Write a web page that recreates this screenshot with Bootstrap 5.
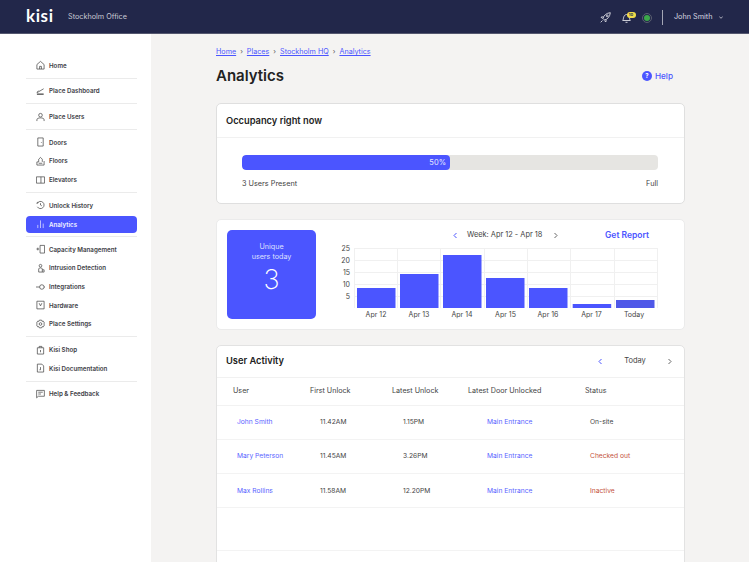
<!doctype html>
<html lang="en"><head><meta charset="utf-8"><title>Analytics</title>
<link href="https://cdn.jsdelivr.net/npm/bootstrap@5.3.0/dist/css/bootstrap.min.css" rel="stylesheet">
<style>
html,body{height:562px;overflow:hidden}
body{font-family:Inter,"Liberation Sans",sans-serif;background:#f4f3f2;color:#222;font-size:8px}
a{color:#4b55ff}
.topbar{height:34px;background:#22274a;border-bottom:1px solid #54576f;color:#d4d4dc;padding-top:2px}
.brand{font:700 17px/1 Lato,Inter,sans-serif;color:#fff;letter-spacing:.6px;margin-left:26px;width:42px;margin-top:-5px}
.office{font-size:7.25px;color:#c9cad4}
.tools{margin-right:26px}
.rocket{margin-right:10.7px}
.bellwrap{width:9px;height:10px;margin-right:11.300px}
.tick{width:1px;height:15px;background:#a4a6b5;margin:0 10.700px 0 10px}
.uname{font-size:7.25px;color:#d8d8e0;margin-right:6.500px}
.nbadge{position:absolute;top:-.5px;right:-4.500px;width:9px;height:6px;border-radius:3px;background:#f1dc4a;color:#22274a;font-size:4px;line-height:6px;text-align:center;font-weight:700}
.status-dot{width:10px;height:10px;border-radius:50%;border:1px solid #5a5f70;background:#22274a;display:flex;align-items:center;justify-content:center}
.status-dot i{display:block;width:6px;height:6px;border-radius:50%;background:#3ca84a}
.layout{height:528px}
.side{width:151px;background:#fff;padding:22px 14px 0 26px;flex:none}
.sitem{height:18.7px;display:flex;align-items:center;gap:4px;padding-left:10px;font-size:6.200px;font-weight:600;color:#3d3d45;border-radius:4px}
.sitem svg{width:9px;height:10px;flex:none;fill:none;stroke:#444;stroke-width:.8}
.sitem.on{background:#4b55ff;color:#f2f2ff;height:17px;margin:1px 0}
.sitem.on svg{stroke:#e8e9ff}
.sdiv{height:1px;background:#ebebeb;margin:3px 0}
.main{width:533px;padding-left:65px;flex:none}
.crumbs{padding-top:13px;height:28px;font-size:7.200px;line-height:10px;gap:4px;color:#555}
.crumbs a{text-decoration:underline;text-underline-offset:1px}
.crumbs span{font-size:7px}
.ttl{height:28px;margin-bottom:13px;padding-right:11px}
.ttl h1{font-size:15px;font-weight:600;margin:0;color:#222}
.helpl{font-size:8.200px;font-weight:500;color:#4b55ff;gap:3px}
.qm{width:10px;height:10px;border-radius:50%;background:#4b55ff;color:#fff;font-size:6px;line-height:10px;text-align:center;font-weight:700}
.box{width:469px;background:#fff;border:1px solid #dfdfdf;border-radius:5px}
.box-a{height:101px;margin-bottom:15px}
.box-b{height:111px;margin-bottom:15px;padding:10px 0 0 10px;border-color:#ebebeb;gap:13px}
.box-c{height:240px;border-radius:5px 5px 0 0;border-color:#e2e2e2}
.boxhead{height:34px;padding:0 9px;border-bottom:1px solid #f1f1f1;font-size:9.300px;font-weight:600;color:#222}
.boxhead.thin{height:32px;padding-right:12px;padding-bottom:1px}
.barwrap{padding:17px 25px 0 25px}
.track{height:15px;background:#e6e5e2;border-radius:4px;overflow:hidden;width:416px}
.fill{height:15px;background:#4b55ff;border-radius:4px;color:#e8e9ff;font-size:7.500px;line-height:15px;text-align:right;padding-right:4px}
.barlabels{margin-top:9px;font-size:7.300px;color:#444;width:416px}
.uniq{width:89px;height:89px;background:#4b55ff;border-radius:5px;color:#dfe0ff;font-size:7.200px;line-height:9.500px;text-align:center;padding-top:12px;flex:none}
.uniq div{font-size:27px;font-weight:200;line-height:30px;color:#fff;margin-top:4px}
.weekrow{height:9px;padding-top:1px;margin-bottom:9px;font-size:7.400px;color:#444;padding-left:124px;padding-right:35px}
.weekrow svg{margin:0 10px 0 0;flex:none}
.weekrow svg.after{margin:0 0 0 12px}
.getrep{color:#4b55ff;font-size:8.500px;font-weight:600;margin-left:auto}
.chartcol{flex:1;min-width:0}
.chartsvg{display:block;margin-top:-5px}
.chartsvg text{font-family:Inter,"Liberation Sans",sans-serif;font-size:7px;fill:#444}
.pager{font-size:7.500px;font-weight:400;color:#444}
.pager b{font-weight:400;width:22px;text-align:center;margin:0 22px 0 22px}
.acttable{width:467px;table-layout:fixed;border-collapse:collapse;font-size:6.700px;color:#444}
.acttable th{font-weight:400;font-size:7.200px;height:27px;padding:1px 0 0 16px;box-shadow:0 2px 3px rgba(0,0,0,.06);color:#444;border-bottom:1px solid #f2f2f2;position:relative}
.acttable td{height:34.3px;border-bottom:1px solid #f3f3f3;padding:0}
.acttable tr.blank td{height:43px}
.c1{width:93px}.c2{width:82px}.c3{width:76px}.c4{width:117px}
.acttable th.c2,.acttable th.c3,.acttable th.c4,.acttable th.c5{padding-left:0}
.acttable td.c1{padding-left:20px}.acttable td.c2{padding-left:10px}.acttable td.c3{padding-left:11px}.acttable td.c4{padding-left:19px}.acttable td.c5{padding-left:5px}
.acttable a{text-decoration:none;color:#5a63ff}
.redt{color:#c4523c}
</style></head><body>
<header class="topbar d-flex align-items-center">
 <div class="brand">kisi</div>
 <div class="office">Stockholm Office</div>
 <div class="ms-auto d-flex align-items-center tools">
  <svg class="rocket" width="11" height="11" viewBox="0 0 11 11" fill="none" stroke="#dcdce4" stroke-width=".9"><path d="M3 6.500 C3.500 3.500 6.500 1 10.300 .7 C10 4.500 7.500 7.500 4.500 8Z M3.300 4.800 L1 5.200 L2.500 6.700 M6.200 7.700 L5.800 10 L4.300 8.500 M2.500 8.500 L.7 10.300"/><circle cx="7.200" cy="3.800" r=".9"/></svg>
  <span class="position-relative d-block bellwrap"><svg class="d-block" width="9" height="10" viewBox="0 0 9 10" fill="none" stroke="#dcdce4" stroke-width=".9"><path d="M.7 7.500 C1.800 6.200 1 2 4.500 1.500 C8 2 7.200 6.200 8.300 7.500Z M3.500 9.300 H5.500"/></svg><span class="nbadge">10</span></span>
  <span class="status-dot"><i></i></span>
  <span class="tick"></span>
  <span class="uname">John Smith</span>
  <svg width="4" height="3" viewBox="0 0 4 3" fill="none" stroke="#cfcfd8" stroke-width=".8"><path d="M.3.5 L2 2.300 L3.700.5"/></svg>
 </div>
</header>
<div class="layout d-flex">
<nav class="side">
 <div class="sitem"><svg viewBox="0 0 10 10"><path d="M1 4.500 L5 1 L9 4.500 V9.500 H1Z M4 9.500 V6.500 H6 V9.500"/></svg>Home</div>
 <div class="sdiv"></div>
 <div class="sitem"><svg viewBox="0 0 10 10"><path d="M1 7 L8.500 2.500 M1 6.500 L3 4.500"/><path d="M1 8.500 H8.500" stroke-width="1.400"/></svg>Place Dashboard</div>
 <div class="sdiv"></div>
 <div class="sitem"><svg viewBox="0 0 10 10"><circle cx="5" cy="3" r="2"/><path d="M1 9.500 V8 C1 6.500 3 6 5 6 C7 6 9 6.500 9 8 V9.500"/></svg>Place Users</div>
 <div class="sdiv"></div>
 <div class="sitem"><svg viewBox="0 0 10 10"><path d="M2 .5 H8 V9.500 H2Z M6 5 V5.800"/></svg>Doors</div>
 <div class="sitem"><svg viewBox="0 0 10 10"><path d="M1 9.500 H9 V5 M1 9.500 L1 6 L3 6 L3 3 L5 1 L7 3 L7 6 M3 7.500 H7"/></svg>Floors</div>
 <div class="sitem"><svg viewBox="0 0 10 10"><path d="M.5 1.500 H9.500 V8.500 H.5Z M5.500 1.500 V8.500"/></svg>Elevators</div>
 <div class="sdiv"></div>
 <div class="sitem"><svg viewBox="0 0 10 10"><path d="M1.500 3 A4 4 0 1 1 1.500 7 M5 3 V5 L6.500 6 M.5 3 H2 V1.500"/></svg>Unlock History</div>
 <div class="sitem on"><svg viewBox="0 0 10 10"><path d="M2 9.500 V6 M5 9.500 V1 M8 9.500 V4.500"/></svg>Analytics</div>
 <div class="sdiv"></div>
 <div class="sitem"><svg viewBox="0 0 10 10"><path d="M4.500 1 H9.500 V9.500 H4.500Z M.5 5 H3.500 M2 3.500 V6.500"/></svg>Capacity Management</div>
 <div class="sitem"><svg viewBox="0 0 10 10"><circle cx="5" cy="2.500" r="1.500"/><path d="M3 9.500 V6 C3 4.500 7 4.500 7 6 V9.500 H3Z M7 7 H9 V9.500 H7"/></svg>Intrusion Detection</div>
 <div class="sitem"><svg viewBox="0 0 10 10"><circle cx="6.500" cy="5" r="2.500"/><path d="M0 5 H4 M9 5 H10"/></svg>Integrations</div>
 <div class="sitem"><svg viewBox="0 0 10 10"><path d="M1 .8 H9 V9.300 H1Z M3.500 3 L5 6 L6.500 3"/></svg>Hardware</div>
 <div class="sitem"><svg viewBox="0 0 10 10"><circle cx="5" cy="5" r="1.500"/><path d="M3.800 .7 H6.200 L6.700 2 L8.200 1.900 L9.400 4 L8.500 5 L9.400 6 L8.200 8.100 L6.700 8 L6.200 9.300 H3.800 L3.300 8 L1.800 8.100 L.6 6 L1.500 5 L.6 4 L1.800 1.900 L3.300 2Z"/></svg>Place Settings</div>
 <div class="sdiv"></div>
 <div class="sitem"><svg viewBox="0 0 10 10"><path d="M1.500 2.500 H8.500 V9.500 H1.500Z M3.500 2.500 V1 H6.500 V2.500 M5 5 V7.500"/></svg>Kisi Shop</div>
 <div class="sitem"><svg viewBox="0 0 10 10"><path d="M1.500 .7 H6.500 L8.500 2.700 V9.500 H1.500Z M5 4 V7 M3.800 7 H5"/></svg>Kisi Documentation</div>
 <div class="sdiv"></div>
 <div class="sitem"><svg viewBox="0 0 10 10"><path d="M.7 1 H9.300 V7.500 H2.500 L.7 9.300Z M2.500 3 H7.500 M2.500 5 H5.500"/></svg>Help &amp; Feedback</div>
</nav>
<main class="main">
 <div class="crumbs d-flex"><a href="#">Home</a><span>›</span><a href="#">Places</a><span>›</span><a href="#">Stockholm HQ</a><span>›</span><a href="#">Analytics</a></div>
 <div class="ttl d-flex justify-content-between align-items-center"><h1>Analytics</h1><span class="helpl d-flex align-items-center"><span class="qm">?</span>Help</span></div>
 <section class="box box-a">
  <div class="boxhead d-flex align-items-center">Occupancy right now</div>
  <div class="barwrap">
   <div class="track"><div class="fill" style="width:50%">50%</div></div>
   <div class="barlabels d-flex justify-content-between"><span>3 Users Present</span><span>Full</span></div>
  </div>
 </section>
 <section class="box box-b d-flex">
  <div class="uniq">Unique<br>users today<div>3</div></div>
  <div class="chartcol">
   <div class="weekrow d-flex align-items-center">
    <svg width="4" height="7" viewBox="0 0 4 7" fill="none" stroke="#4b55ff"><path d="M3.500 1 L1 3.500 L3.500 6"/></svg>
    <span>Week: Apr 12 - Apr 18</span>
    <svg class="after" width="4" height="7" viewBox="0 0 4 7" fill="none" stroke="#666"><path d="M.5 1 L3 3.500 L.5 6"/></svg>
    <span class="getrep">Get Report</span>
   </div>
   <svg class="chartsvg" width="332" height="79" viewBox="0 -5 332 79">
    <g stroke="#f0f0f0" stroke-width="1" fill="none">
     <path d="M25 .5 H328 M25 12.500 H328 M25 24.500 H328 M25 36.500 H328 M25 48.500 H328 M25.500 0 V60 M68.500 0 V60 M111.500 0 V60 M155.500 0 V60 M198.500 0 V60 M241.500 0 V60 M285.500 0 V60 M328.500 0 V60"/>
    </g>
    <g fill="#4b55ff">
     <rect x="28" y="40" width="38.500" height="20"/><rect x="71" y="26" width="38.500" height="34"/><rect x="114" y="7" width="38.500" height="53"/><rect x="157" y="30" width="38.500" height="30"/><rect x="200" y="40" width="38.500" height="20"/><rect x="243.700" y="56" width="38.500" height="4"/><rect x="287" y="52" width="38.500" height="8" fill="#4f58e8"/>
    </g>
    <g text-anchor="end"><text x="21" y="2.700">25</text><text x="21" y="14.700">20</text><text x="21" y="26.700">15</text><text x="21" y="38.700">10</text><text x="21" y="50.700">5</text></g>
    <g text-anchor="middle"><text x="47" y="68.500">Apr 12</text><text x="90" y="68.500">Apr 13</text><text x="133" y="68.500">Apr 14</text><text x="176.500" y="68.500">Apr 15</text><text x="219" y="68.500">Apr 16</text><text x="262.500" y="68.500">Apr 17</text><text x="305" y="68.500">Today</text></g>
   </svg>
  </div>
 </section>
 <section class="box box-c">
  <div class="boxhead thin d-flex align-items-center justify-content-between">User Activity<span class="pager d-flex align-items-center">
    <svg width="4" height="7" viewBox="0 0 4 7" fill="none" stroke="#4b55ff"><path d="M3.500 1 L1 3.500 L3.500 6"/></svg><b>Today</b><svg width="4" height="7" viewBox="0 0 4 7" fill="none" stroke="#666"><path d="M.5 1 L3 3.500 L.5 6"/></svg></span></div>
  <table class="acttable">
   <thead><tr><th class="c1">User</th><th class="c2">First Unlock</th><th class="c3">Latest Unlock</th><th class="c4">Latest Door Unlocked</th><th class="c5">Status</th></tr></thead>
   <tbody>
    <tr><td class="c1"><a href="#">John Smith</a></td><td class="c2">11.42AM</td><td class="c3">1.15PM</td><td class="c4"><a href="#">Main Entrance</a></td><td class="c5">On-site</td></tr>
    <tr><td class="c1"><a href="#">Mary Peterson</a></td><td class="c2">11.45AM</td><td class="c3">3.26PM</td><td class="c4"><a href="#">Main Entrance</a></td><td class="c5 redt">Checked out</td></tr>
    <tr><td class="c1"><a href="#">Max Rollins</a></td><td class="c2">11.58AM</td><td class="c3">12.20PM</td><td class="c4"><a href="#">Main Entrance</a></td><td class="c5 redt">Inactive</td></tr>
    <tr class="blank"><td colspan="5"></td></tr>
   </tbody>
  </table>
 </section>
</main>
</div>
<script src="https://cdn.jsdelivr.net/npm/bootstrap@5.3.0/dist/js/bootstrap.bundle.min.js"></script>
</body></html>
